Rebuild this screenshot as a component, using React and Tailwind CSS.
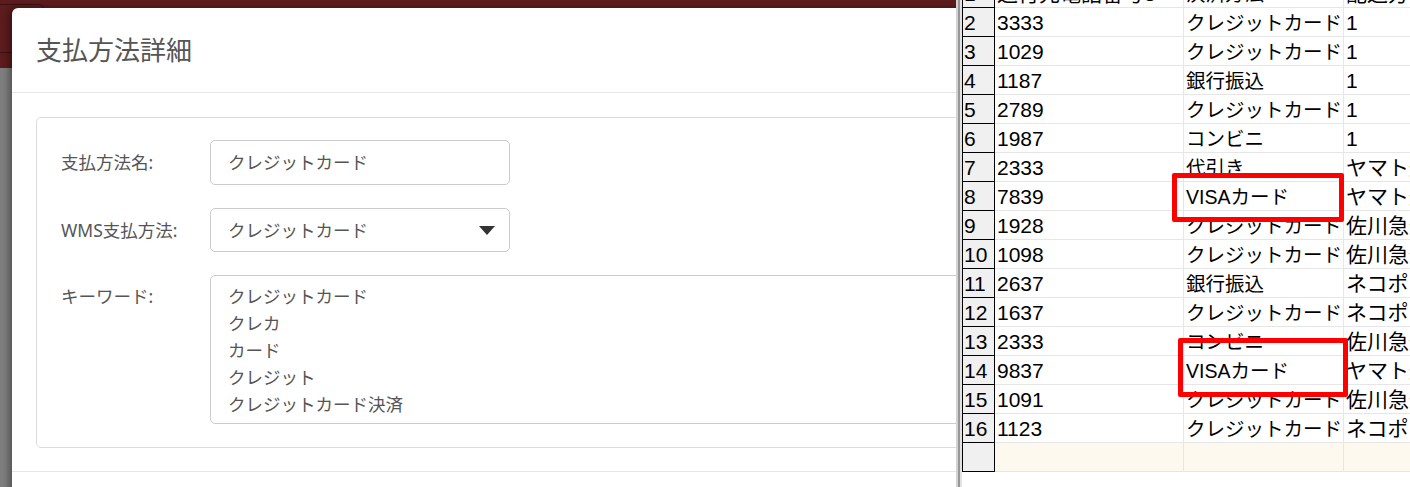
import React from "react";

const rows = [
  ["1", "送付先電話番号3", "決済方法", "配送方法"],
  ["2", "3333", "クレジットカード", "1"],
  ["3", "1029", "クレジットカード", "1"],
  ["4", "1187", "銀行振込", "1"],
  ["5", "2789", "クレジットカード", "1"],
  ["6", "1987", "コンビニ", "1"],
  ["7", "2333", "代引き", "ヤマト運輸"],
  ["8", "7839", "VISAカード", "ヤマト運輸"],
  ["9", "1928", "クレジットカード", "佐川急便"],
  ["10", "1098", "クレジットカード", "佐川急便"],
  ["11", "2637", "銀行振込", "ネコポス"],
  ["12", "1637", "クレジットカード", "ネコポス"],
  ["13", "2333", "コンビニ", "佐川急便"],
  ["14", "9837", "VISAカード", "ヤマト運輸"],
  ["15", "1091", "クレジットカード", "佐川急便"],
  ["16", "1123", "クレジットカード", "ネコポス"],
];

const keywords = ["クレジットカード", "クレカ", "カード", "クレジット", "クレジットカード決済"];

const modalFont = { fontFamily: '"Noto Sans", "Noto Sans CJK JP", sans-serif' };
const sheetFont = { fontFamily: '"Liberation Sans", "Noto Sans CJK JP", sans-serif' };

const App = () => {
  return (
    <div className="flex w-[1410px] h-[487px] overflow-hidden bg-white">
      {/* Web page behind the modal */}
      <div className="relative w-[956px] shrink-0 overflow-hidden flex flex-col" style={modalFont}>
        <div className="h-[68px] bg-[#5c1b1c] flex flex-col">
          <div className="h-[53px] border-b border-[#3a1011]">
            <div className="mt-[4px] w-[45px] h-[49px] rounded-tr-md border border-[#3a1011] border-l-0"></div>
          </div>
        </div>
        <div className="flex-1 bg-[#7e7e7e]"></div>

        {/* Modal */}
        <div className="absolute left-[12px] top-[8px] w-[1200px] h-[520px] bg-white rounded-tl-md shadow-[-3px_0_6px_rgba(0,0,0,0.35)]">
          <div className="h-[85px] px-6 flex items-center border-b border-[#e5e5e5]">
            <h2 className="text-[26px] text-[#555] leading-none">支払方法詳細</h2>
          </div>
          <div className="p-6 pb-[23px] border-b border-[#e5e5e5]">
            <div className="border border-[#dcdcdc] rounded-[5px] pt-[22px] pb-[23px] pl-6 flex flex-col gap-[23px] text-[17.5px] text-[#555]">
              <div className="flex items-center">
                <label className="w-[149px] shrink-0">支払方法名:</label>
                <div className="w-[300px] h-[45px] border border-[#ccc] rounded-[5px] px-[17px] flex items-center">
                  クレジットカード
                </div>
              </div>
              <div className="flex items-center">
                <label className="w-[149px] shrink-0">WMS支払方法:</label>
                <div className="w-[300px] h-[44px] border border-[#ccc] rounded-[5px] pl-[17px] pr-[14px] flex items-center justify-between">
                  <span>クレジットカード</span>
                  <svg width="16" height="9" viewBox="0 0 16 9" className="mt-[1px]">
                    <path d="M0 0 L16 0 L8 9 Z" fill="#333" />
                  </svg>
                </div>
              </div>
              <div className="flex items-start">
                <label className="w-[149px] shrink-0 pt-[8px] leading-[27px]">キーワード:</label>
                <div className="w-[900px] h-[149px] border border-[#ccc] rounded-[5px] px-[17px] py-[7px] leading-[27px]">
                  {keywords.map((k) => (
                    <div key={k}>{k}</div>
                  ))}
                </div>
              </div>
            </div>
          </div>
        </div>
      </div>

      {/* Spreadsheet window */}
      <div className="flex-1 border-l-2 border-[#d2d2d2]">
        <div className="h-full border-l-2 border-[#979797]">
          <div className="h-full border-l-2 border-[#e2e2e2] relative overflow-hidden" style={sheetFont}>
            <div className="mt-[-21px] text-black">
              {rows.map((r) => (
                <div key={r[0]} className="flex h-[29px]">
                  <div className="w-[33px] shrink-0 bg-[#f0f0f0] border-l border-r border-b border-black pl-[1px] pt-[3px] text-[21px] leading-[24px]">
                    {r[0]}
                  </div>
                  <div className="w-[189px] shrink-0 border-r border-b border-[#e6e6e6] pl-[2px] pt-[3px] text-[21px] leading-[24px]">
                    {r[1]}
                  </div>
                  <div className="w-[160px] shrink-0 border-r border-b border-[#e6e6e6] pl-[2px] pt-[3px] text-[19.5px] leading-[24px] whitespace-nowrap overflow-hidden">
                    {r[2]}
                  </div>
                  <div className="flex-1 border-b border-[#e6e6e6] pl-[2px] pt-[3px] text-[21px] leading-[24px] whitespace-nowrap overflow-hidden">
                    {r[3]}
                  </div>
                </div>
              ))}
              <div className="flex h-[29px]">
                <div className="w-[33px] shrink-0 bg-[#f0f0f0] border-l border-r border-b border-black"></div>
                <div className="w-[189px] shrink-0 bg-[#fdf9ef] border-r border-b border-[#e6e6e6]"></div>
                <div className="w-[160px] shrink-0 bg-[#fdf9ef] border-r border-b border-[#e6e6e6]"></div>
                <div className="flex-1 bg-[#fdf9ef] border-b border-[#e6e6e6]"></div>
              </div>
            </div>

            {/* Red highlight boxes */}
            <div className="absolute left-[210px] top-[173px] w-[172px] h-[49px] border-[5px] border-[#ff0000] rounded-[2px]"></div>
            <div className="absolute left-[216px] top-[338px] w-[170px] h-[59px] border-[5px] border-[#ff0000] rounded-[2px]"></div>
          </div>
        </div>
      </div>
    </div>
  );
};

export default App;
